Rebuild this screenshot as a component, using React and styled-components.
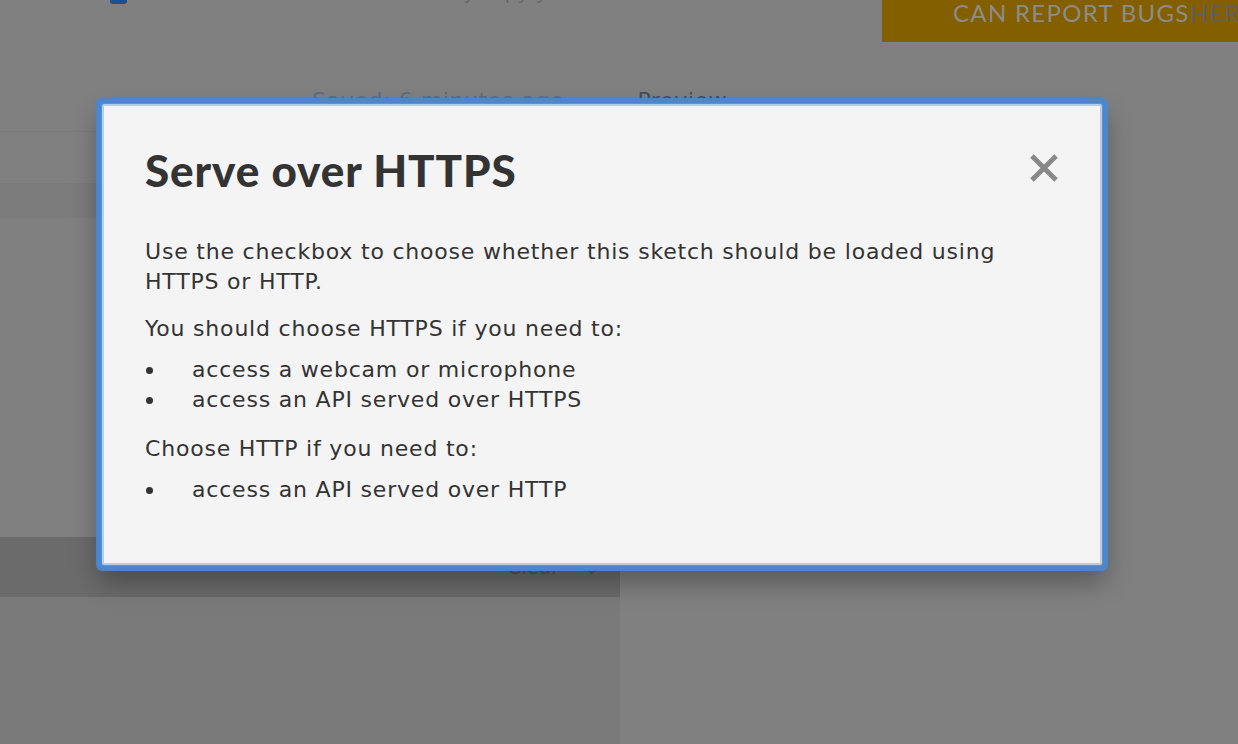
import React from "react";
import styled, { createGlobalStyle } from "styled-components";

const Global = createGlobalStyle`
  html, body { margin: 0; padding: 0; }
  body {
    width: 1238px;
    height: 744px;
    overflow: hidden;
    background: #808080;
    font-family: "DejaVu Sans", "Open Sans", sans-serif;
  }
`;

const Page = styled.div`
  position: relative;
  width: 1238px;
  height: 744px;
  overflow: hidden;
  background: #808080;
  display: flex;
  flex-direction: column;
`;

const TopBar = styled.div`
  height: 42px;
  display: flex;
  align-items: flex-start;
`;

const TopLeft = styled.div`
  flex: 1;
  display: flex;
  align-items: flex-end;
  gap: 14px;
  padding-left: 110px;
  margin-top: -22px;
  height: 26px;
  color: #6a6a6a;
  font-size: 20px;
  white-space: nowrap;
`;

const BlueBox = styled.span`
  width: 17px;
  height: 24px;
  border-radius: 3px;
  background: #1d4f96;
`;

const Banner = styled.div`
  width: 356px;
  height: 42px;
  background: #835f00;
  overflow: hidden;
  white-space: nowrap;
  padding-left: 71px;
  box-sizing: border-box;
  font-family: "Lato", "DejaVu Sans", sans-serif;
  font-size: 24px;
  line-height: 26px;
  font-weight: 400;
  color: #8c8c8c;
  letter-spacing: 1.3px;
`;

const BannerLink = styled.span`
  color: #5f5f5f;
`;

const SaveRow = styled.div`
  margin-top: 46px;
  height: 44px;
  display: flex;
  align-items: flex-start;
  padding-left: 312px;
  font-size: 22px;
  line-height: 26px;
  letter-spacing: 0.6px;
  color: #646b78;
  white-space: nowrap;
  border-bottom: 1px solid #7a7a7a;
  width: 620px;
  box-sizing: border-box;
`;

const Chevron = styled.span`
  margin: 0 24px 0 30px;
`;

const PreviewLink = styled.span`
  color: #464e5e;
`;

const Band = styled.div`
  width: 620px;
  height: ${(p) => p.h}px;
  margin-top: ${(p) => p.top}px;
  background: ${(p) => p.bg};
  display: flex;
  justify-content: flex-end;
  align-items: center;
  padding-right: 20px;
  box-sizing: border-box;
  color: #555;
  font-size: 20px;
  gap: 24px;
`;

const Lower = styled.div`
  flex: 1;
  display: flex;
`;

const LeftPane = styled.div`
  width: 620px;
  background: #7a7a7a;
`;

const Modal = styled.div`
  position: absolute;
  left: 102px;
  top: 104px;
  width: 1000px;
  height: 461px;
  box-sizing: border-box;
  background: #f4f4f4;
  border: 2px solid #b7cde6;
  border-radius: 2px;
  padding: 39px 41px 0 41px;
  box-shadow: 0 0 0 1px #5a92d2, 0 0 1px 6px #4a87cc,
    0 14px 26px 4px rgba(0, 0, 0, 0.3);
  color: #333;
`;

const Header = styled.div`
  display: flex;
  justify-content: space-between;
  align-items: flex-start;
  margin-bottom: 42px;
`;

const Title = styled.h2`
  margin: 0;
  font-family: "Lato", "DejaVu Sans", sans-serif;
  font-weight: 900;
  font-size: 44px;
  line-height: 50px;
  letter-spacing: 0.9px;
  color: #333;
`;

const CloseButton = styled.button`
  border: 0;
  background: none;
  padding: 0;
  margin-top: 8px;
  width: 30px;
  height: 30px;
  cursor: pointer;
  display: flex;
`;

const Text = styled.p`
  margin: 0 0 17px;
  font-size: 22px;
  line-height: 30px;
  letter-spacing: 0.8px;
`;

const List = styled.ul`
  list-style: none;
  margin: -6px 0 19px;
  padding: 0;
`;

const Item = styled.li`
  display: flex;
  font-size: 22px;
  line-height: 30px;
  letter-spacing: 0.8px;
  &::before {
    content: "";
    flex: none;
    width: 7px;
    height: 7px;
    margin-top: 12px;
    margin-left: 1px;
    margin-right: 39px;
    border-radius: 50%;
    background: #333;
  }
`;

export default function App() {
  return (
    <>
      <Global />
      <Page>
        <TopBar>
          <TopLeft>
            <BlueBox />
            <span>Serve over HTTPS · automatically copy your sketch</span>
          </TopLeft>
          <Banner>
            CAN REPORT BUGS<BannerLink>HERE</BannerLink>
          </Banner>
        </TopBar>
        <SaveRow>
          <span>Saved: 6 minutes ago</span>
          <Chevron>⌄</Chevron>
          <PreviewLink>Preview</PreviewLink>
        </SaveRow>
        <Band top={51} h={35} bg="#7b7b7b" />
        <Band top={319} h={60} bg="#6b6b6b">
          <span>Clear</span>
          <span>⌄</span>
        </Band>
        <Lower>
          <LeftPane />
        </Lower>
        <Modal role="dialog" aria-label="Serve over HTTPS">
          <Header>
            <Title>Serve over HTTPS</Title>
            <CloseButton aria-label="Close">
              <svg width="30" height="30" viewBox="0 0 30 30">
                <path
                  d="M3 3 L27 27 M27 3 L3 27"
                  stroke="#888"
                  strokeWidth="5"
                  fill="none"
                />
              </svg>
            </CloseButton>
          </Header>
          <Text>
            Use the checkbox to choose whether this sketch should be loaded
            using HTTPS or HTTP.
          </Text>
          <Text>You should choose HTTPS if you need to:</Text>
          <List>
            <Item>access a webcam or microphone</Item>
            <Item>access an API served over HTTPS</Item>
          </List>
          <Text>Choose HTTP if you need to:</Text>
          <List>
            <Item>access an API served over HTTP</Item>
          </List>
        </Modal>
      </Page>
    </>
  );
}
